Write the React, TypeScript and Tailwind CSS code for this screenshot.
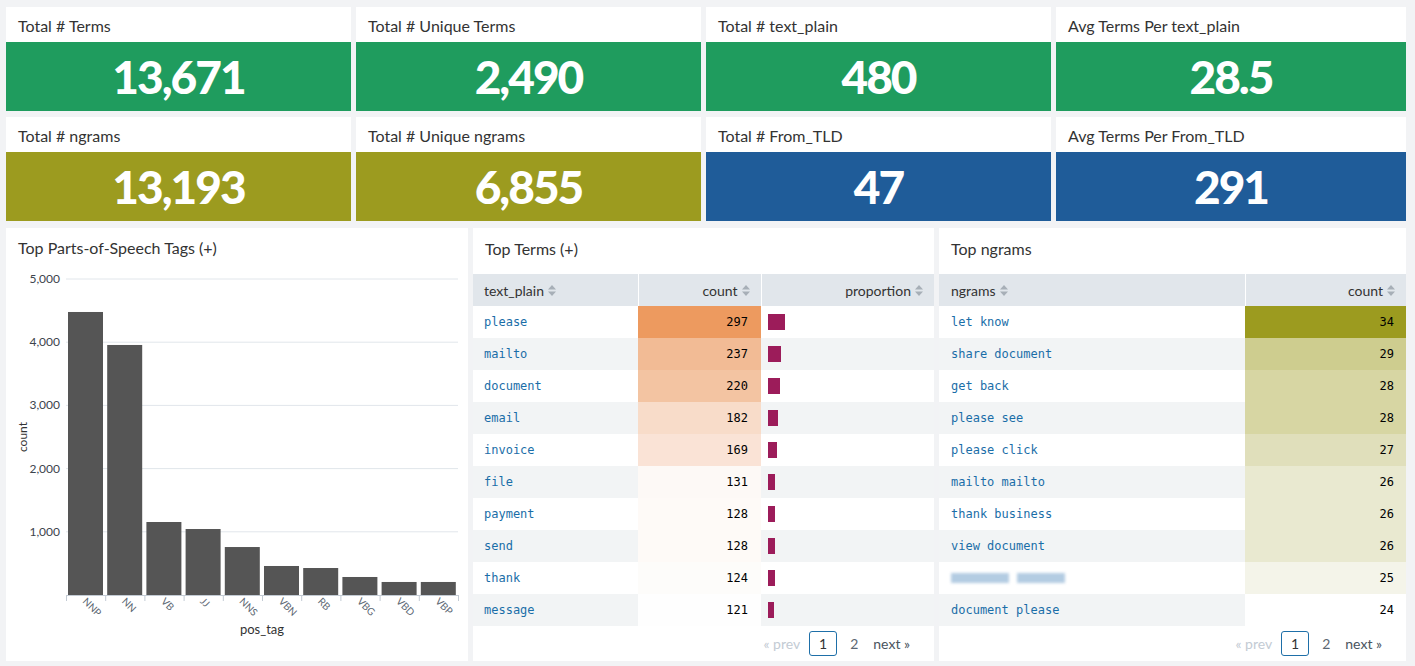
import React from "react";

const sans = { fontFamily: "Lato, 'Open Sans', sans-serif" };

const stats = [
  { title: "Total # Terms", value: "13,671", bg: "bg-[#1f9c5e]" },
  { title: "Total # Unique Terms", value: "2,490", bg: "bg-[#1f9c5e]" },
  { title: "Total # text_plain", value: "480", bg: "bg-[#1f9c5e]" },
  { title: "Avg Terms Per text_plain", value: "28.5", bg: "bg-[#1f9c5e]" },
  { title: "Total # ngrams", value: "13,193", bg: "bg-[#9c9b1f]" },
  { title: "Total # Unique ngrams", value: "6,855", bg: "bg-[#9c9b1f]" },
  { title: "Total # From_TLD", value: "47", bg: "bg-[#1f5c99]" },
  { title: "Avg Terms Per From_TLD", value: "291", bg: "bg-[#1f5c99]" },
];

const terms = [
  { term: "please", count: 297, heat: "bg-[#ed9a5f]", bar: 17 },
  { term: "mailto", count: 237, heat: "bg-[#f2bb95]", bar: 13 },
  { term: "document", count: 220, heat: "bg-[#f3c4a2]", bar: 12 },
  { term: "email", count: 182, heat: "bg-[#f8dcc9]", bar: 10 },
  { term: "invoice", count: 169, heat: "bg-[#fae3d6]", bar: 9 },
  { term: "file", count: 131, heat: "bg-[#fdf9f6]", bar: 7 },
  { term: "payment", count: 128, heat: "bg-[#fefaf7]", bar: 7 },
  { term: "send", count: 128, heat: "bg-[#fefaf7]", bar: 7 },
  { term: "thank", count: 124, heat: "bg-[#fdfcfa]", bar: 7 },
  { term: "message", count: 121, heat: "bg-[#fefefe]", bar: 6 },
];

const ngrams = [
  { term: "let know", count: 34, heat: "bg-[#9c9b1f]" },
  { term: "share document", count: 29, heat: "bg-[#cecd8f]" },
  { term: "get back", count: 28, heat: "bg-[#d7d6a3]" },
  { term: "please see", count: 28, heat: "bg-[#d7d6a3]" },
  { term: "please click", count: 27, heat: "bg-[#e0dfbb]" },
  { term: "mailto mailto", count: 26, heat: "bg-[#e9e9d0]" },
  { term: "thank business", count: 26, heat: "bg-[#e9e9d0]" },
  { term: "view document", count: 26, heat: "bg-[#e9e9d0]" },
  { term: "", count: 25, heat: "bg-[#f4f4e9]" },
  { term: "document please", count: 24, heat: "bg-white" },
];

const pos = [
  ["NNP", 4478],
  ["NN", 3956],
  ["VB", 1155],
  ["JJ", 1044],
  ["NNS", 759],
  ["VBN", 459],
  ["RB", 427],
  ["VBG", 285],
  ["VBD", 206],
  ["VBP", 206],
] as const;

function StatPanel({ title, value, bg }: { title: string; value: string; bg: string }) {
  return (
    <div className="bg-white flex flex-col">
      <div className="h-[35px] flex items-center pt-[3px] px-[12px] text-[16px] text-[#333]" style={sans}>
        {title}
      </div>
      <div
        className={`h-[69px] flex items-center justify-center text-white text-[46px] font-black tracking-[-2px] ${bg}`}
        style={sans}
      >
        {value}
      </div>
    </div>
  );
}

function SortIcon() {
  return (
    <svg width="8" height="11" viewBox="0 0 8 11" className="inline-block ml-[4px] -mt-[2px]">
      <path d="M4 0 L8 4.5 H0 Z" fill="#a7afb7" />
      <path d="M4 11 L8 6.5 H0 Z" fill="#a7afb7" />
    </svg>
  );
}

function Pager() {
  return (
    <div className="h-[35px] flex items-center justify-end pr-[24px] text-[14px]" style={sans}>
      <span className="text-[#c3cbd4] mr-[9px]">« prev</span>
      <span className="w-[28px] h-[25px] flex items-center justify-center border border-[#1e6fa8] rounded-[3px] text-[#333]">
        1
      </span>
      <span className="ml-[13px] text-[#5c6773]">2</span>
      <span className="ml-[15px] text-[#4a545e]">next »</span>
    </div>
  );
}

function Chart() {
  const y = (v: number) => 327 - v * 0.0632;
  const x0 = 60;
  const step = 39.2;
  return (
    <svg width="462" height="392" className="block">
      {[1000, 2000, 3000, 4000, 5000].map((v) => (
        <g key={v}>
          <line x1={x0} x2={452} y1={y(v)} y2={y(v)} stroke="#e1e6eb" strokeWidth="1" />
          <text x={54} y={y(v) + 4} textAnchor="end" fontSize="12" fill="#3c444d" style={sans}>
            {v.toLocaleString("en-US")}
          </text>
        </g>
      ))}
      {pos.map(([tag, v], i) => (
        <rect key={tag} x={x0 + 2 + i * step} y={y(v)} width={35} height={327 - y(v)} fill="#555" />
      ))}
      <line x1={x0} x2={452} y1={327.5} y2={327.5} stroke="#c3cbd4" strokeWidth="1" />
      {Array.from({ length: 11 }).map((_, i) => (
        <line key={i} x1={x0 + i * step + 0.5} x2={x0 + i * step + 0.5} y1={327} y2={333} stroke="#c3cbd4" />
      ))}
      {pos.map(([tag], i) => {
        const cx = x0 + 16 + i * step;
        return (
          <text
            key={tag}
            x={cx}
            y={334}
            fontSize="10"
            fill="#5c6773"
            transform={`rotate(45 ${cx} 334)`}
            style={sans}
          >
            {tag}
          </text>
        );
      })}
      <text x={256} y={366} textAnchor="middle" fontSize="13" fill="#333" style={sans}>
        pos_tag
      </text>
      <text
        x={21}
        y={169}
        textAnchor="middle"
        fontSize="12"
        fill="#333"
        transform="rotate(-90 21 169)"
        style={sans}
      >
        count
      </text>
    </svg>
  );
}

const mono = { fontFamily: "'DejaVu Sans Mono', 'Liberation Mono', monospace" };

function TermsPanel() {
  return (
    <div className="bg-white flex flex-col">
      <div className="h-[46px] flex items-center pb-[4px] px-[12px] text-[16px] text-[#333]" style={sans}>
        Top Terms (+)
      </div>
      <table className="w-full table-fixed border-collapse">
        <colgroup>
          <col className="w-[165px]" />
          <col className="w-[123px]" />
          <col />
        </colgroup>
        <thead>
          <tr className="h-[32px] bg-[#e1e6eb] text-[14px] text-[#333]" style={sans}>
            <th className="text-left font-normal pl-[11px] border-r border-white">
              text_plain
              <SortIcon />
            </th>
            <th className="text-right font-normal pr-[11px] border-r border-white">
              count
              <SortIcon />
            </th>
            <th className="text-right font-normal pr-[11px]">
              proportion
              <SortIcon />
            </th>
          </tr>
        </thead>
        <tbody className="text-[12px]" style={mono}>
          {terms.map((r, i) => (
            <tr key={r.term} className={`h-[32px] ${i % 2 ? "bg-[#f2f4f5]" : "bg-white"}`}>
              <td className="pl-[11px] text-[#1a6ea8]">{r.term}</td>
              <td className={`text-right pr-[13px] text-black ${r.heat}`}>{r.count}</td>
              <td className="pl-[7px]">
                <div className="h-[16px] bg-[#9c1c5a]" style={{ width: r.bar }} />
              </td>
            </tr>
          ))}
        </tbody>
      </table>
      <Pager />
    </div>
  );
}

function NgramsPanel() {
  return (
    <div className="bg-white flex flex-col">
      <div className="h-[46px] flex items-center pb-[4px] px-[12px] text-[16px] text-[#333]" style={sans}>
        Top ngrams
      </div>
      <table className="w-full table-fixed border-collapse">
        <colgroup>
          <col className="w-[306px]" />
          <col />
        </colgroup>
        <thead>
          <tr className="h-[32px] bg-[#e1e6eb] text-[14px] text-[#333]" style={sans}>
            <th className="text-left font-normal pl-[12px] border-r border-white">
              ngrams
              <SortIcon />
            </th>
            <th className="text-right font-normal pr-[11px]">
              count
              <SortIcon />
            </th>
          </tr>
        </thead>
        <tbody className="text-[12px]" style={mono}>
          {ngrams.map((r, i) => (
            <tr key={i} className={`h-[32px] ${i % 2 ? "bg-[#f2f4f5]" : "bg-white"}`}>
              <td className="pl-[12px] text-[#1a6ea8]">
                {r.term ? (
                  r.term
                ) : (
                  <span className="flex items-center gap-[8px] blur-[1.5px]">
                    <span className="w-[58px] h-[10px] bg-[#b3cce2]" />
                    <span className="w-[48px] h-[10px] bg-[#b3cce2]" />
                  </span>
                )}
              </td>
              <td className={`text-right pr-[12px] text-black ${r.heat}`}>{r.count}</td>
            </tr>
          ))}
        </tbody>
      </table>
      <Pager />
    </div>
  );
}

export default function App() {
  return (
    <div className="w-[1415px] h-[666px] bg-[#f2f3f5] pl-[6px] pr-[9px] pt-[7px] overflow-hidden">
      <div className="grid grid-cols-[345px_345px_345px_1fr] gap-x-[5px] gap-y-[6px]">
        {stats.map((s) => (
          <StatPanel key={s.title} {...s} />
        ))}
      </div>
      <div className="grid grid-cols-[462px_461px_1fr] gap-x-[5px] mt-[7px] h-[433px]">
        <div className="bg-white flex flex-col">
          <div className="h-[40px] flex items-center px-[12px] text-[16px] text-[#333]" style={sans}>
            Top Parts-of-Speech Tags (+)
          </div>
          <Chart />
        </div>
        <TermsPanel />
        <NgramsPanel />
      </div>
    </div>
  );
}
